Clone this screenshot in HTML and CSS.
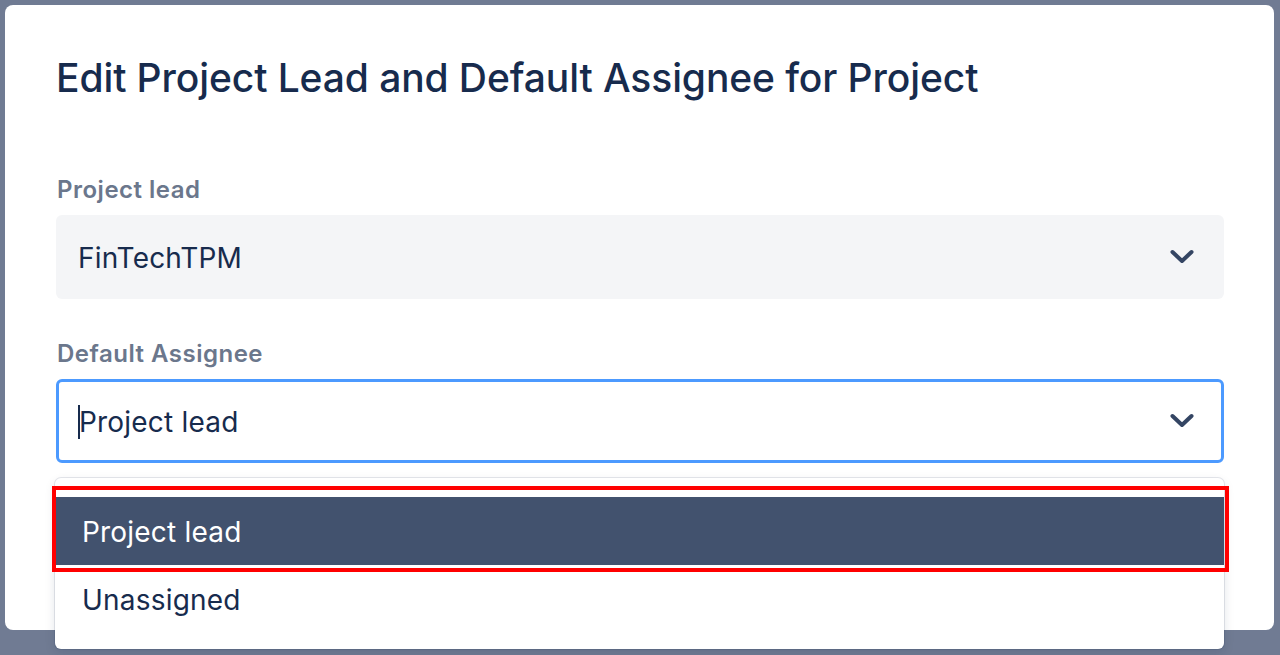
FILE: index.html
```html
<!DOCTYPE html>
<html lang="en">
<head>
<meta charset="utf-8">
<title>Edit Project Lead and Default Assignee</title>
<link rel="stylesheet" href="styles.css">
</head>
<body>
<div class="backdrop">
  <div class="modal">
    <h1 class="title">Edit Project Lead and Default Assignee for Project</h1>
    <div class="field">
      <label class="label">Project lead</label>
      <div class="select select-filled">
        <span class="value">FinTechTPM</span>
        <svg class="chevron" width="24" height="16" viewBox="0 0 24 16"><path d="M2.5 3 L12 12 L21.5 3" fill="none" stroke="#344563" stroke-width="4" stroke-linecap="round" stroke-linejoin="round"/></svg>
      </div>
    </div>
    <div class="field field-second">
      <label class="label">Default Assignee</label>
      <div class="select select-focused">
        <span class="caret"></span>
        <span class="value">Project lead</span>
        <svg class="chevron" width="24" height="16" viewBox="0 0 24 16"><path d="M2.5 3 L12 12 L21.5 3" fill="none" stroke="#344563" stroke-width="4" stroke-linecap="round" stroke-linejoin="round"/></svg>
        <div class="menu">
          <div class="option option-active">Project lead</div>
          <div class="option">Unassigned</div>
        </div>
        <div class="highlight-box"></div>
      </div>
    </div>
  </div>
</div>
</body>
</html>
```

FILE: styles.css
```css
html, body {
  margin: 0;
  padding: 0;
}
body {
  background: #707b93;
  font-family: Inter, "Noto Sans", "Liberation Sans", sans-serif;
  color: #172b4d;
  width: 1280px;
  height: 655px;
  overflow: hidden;
}
.backdrop {
  padding: 5px 6px 0 5px;
  height: 650px;
}
.modal {
  background: #ffffff;
  border-radius: 8px;
  height: 625px;
  padding: 49px 50px 0 51px;
  box-sizing: border-box;
}
.title {
  margin: 0;
  font-size: 39px;
  font-weight: 500;
  line-height: 48px;
  letter-spacing: -0.1px;
  color: #172b4d;
}
.field {
  margin-top: 74px;
  display: flex;
  flex-direction: column;
}
.field-second {
  margin-top: 41px;
}
.label {
  font-size: 24px;
  font-weight: 600;
  line-height: 28px;
  letter-spacing: 0.5px;
  color: #6b778c;
  margin-bottom: 11px;
  padding-left: 1px;
}
.select {
  position: relative;
  display: flex;
  align-items: center;
  height: 84px;
  border-radius: 6px;
  padding: 0 30px 0 22px;
  box-sizing: border-box;
}
.select-filled {
  background: #f4f5f7;
}
.select-focused {
  background: #ffffff;
  border: 3px solid #4c9aff;
  height: 84px;
  padding-left: 19px;
  padding-right: 27px;
}
.value {
  flex: 1;
  font-size: 28px;
  line-height: 34px;
  letter-spacing: 0.2px;
  color: #172b4d;
  padding-top: 2px;
}
.caret {
  width: 2px;
  height: 34px;
  background: #172b4d;
  margin-right: -1px;
  margin-top: 2px;
}
.chevron {
  display: block;
}
.menu {
  position: absolute;
  left: -4px;
  right: -3px;
  top: 96px;
  background: #ffffff;
  border-radius: 6px;
  box-shadow: 0 0 0 1px rgba(9, 30, 66, 0.1), 0 4px 11px rgba(9, 30, 66, 0.12);
  padding: 19px 0 16px;
  z-index: 2;
}
.option {
  height: 68px;
  display: flex;
  align-items: center;
  padding-left: 27px;
  font-size: 28px;
  letter-spacing: 0.2px;
  color: #172b4d;
  padding-top: 2px;
  box-sizing: border-box;
}
.option-active {
  background: #42526e;
  color: #ffffff;
}
.highlight-box {
  position: absolute;
  left: -7px;
  right: -8px;
  top: 104px;
  height: 86px;
  border: 4px solid #ff0000;
  box-sizing: border-box;
  z-index: 3;
}
```
